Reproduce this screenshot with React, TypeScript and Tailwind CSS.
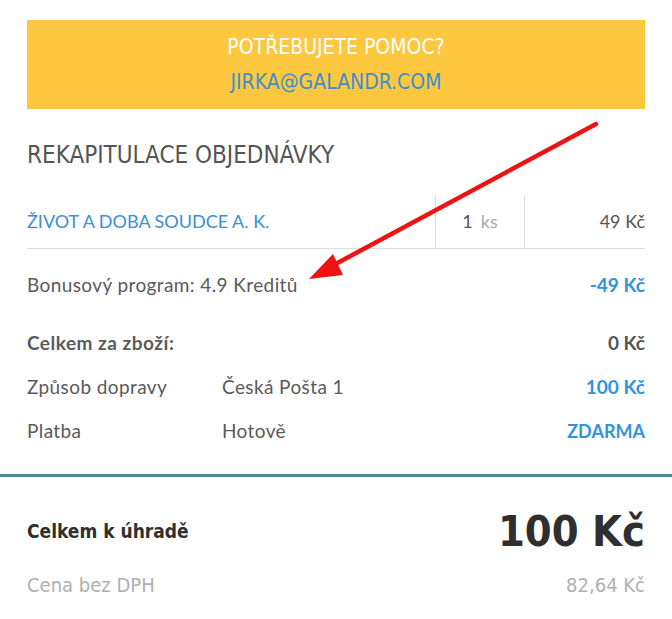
import { ReactNode } from 'react';

const body = "font-['Lato','Liberation_Sans',sans-serif]";
const head = "font-['DejaVu_Sans_Condensed','DejaVu_Sans',sans-serif]";

function Row({ label, middle, value, strong, blue, caps }: { label: string; middle?: string; value: string; strong?: boolean; blue?: boolean; caps?: boolean }) {
  return (
    <div className="flex h-[44px] items-center whitespace-nowrap">
      <div className={`w-[195px] shrink-0 ${strong ? 'text-[19px] font-bold tracking-[0.5px]' : 'text-[19px] tracking-[0.4px]'}`}>{label}</div>
      <div className="flex-1 text-[19px] tracking-[0.4px]">{middle}</div>
      <div className={`font-bold ${caps ? 'text-[18px]' : 'text-[19px]'} ${blue ? 'text-[#3393dc]' : 'text-[#555]'}`}>{value}</div>
    </div>
  );
}

function Arrow() {
  return (
    <svg className="pointer-events-none absolute left-0 top-0" width="672" height="619" viewBox="0 0 672 619">
      <line x1="596" y1="124" x2="330" y2="267" stroke="#ef1212" strokeWidth="4.5" strokeLinecap="round" />
      <polygon points="309,279 333,254 343,275" fill="#ef1212" />
    </svg>
  );
}

function Col({ children, className }: { children: ReactNode; className?: string }) {
  return <div className={`flex h-full items-center ${className ?? ''}`}>{children}</div>;
}

export default function App() {
  return (
    <div className={`relative h-[619px] w-[672px] overflow-hidden bg-white pt-[20px] text-[#5a5a5a] ${body}`}>
      <div className={`mx-[27px] flex h-[89px] flex-col items-center justify-center bg-[#fdc83f] text-[21px] ${head}`}>
        <div className="leading-[35px] text-white">POTŘEBUJETE POMOC?</div>
        <div className="leading-[35px] text-[#3d8fcf]">JIRKA@GALANDR.COM</div>
      </div>

      <div className="px-[27px]">
        <h2 className={`mt-[31px] text-[24px] leading-[30px] text-[#555] ${head}`}>REKAPITULACE OBJEDNÁVKY</h2>

        <div className="mt-[25px] flex h-[54px] border-b border-[#dcdcdc] text-[18px]">
          <Col className="flex-1 text-[#3d8fd6]">ŽIVOT A DOBA SOUDCE A. K.</Col>
          <Col className="w-[90px] justify-center border-x border-[#dcdcdc]">
            <span className="text-[#555]">1</span>
            <span className="ml-[8px] text-[#aaa]">ks</span>
          </Col>
          <Col className="w-[120px] justify-end text-[#555]">49 Kč</Col>
        </div>

        <div className="mt-[14px]">
          <Row label="Bonusový program: 4.9 Kreditů" value="-49 Kč" blue />
        </div>
        <div className="mt-[14px]">
          <Row label="Celkem za zboží:" value="0 Kč" strong />
          <Row label="Způsob dopravy" middle="Česká Pošta 1" value="100 Kč" blue />
          <Row label="Platba" middle="Hotově" value="ZDARMA" blue caps />
        </div>
      </div>

      <div className="mt-[21px] h-[3px] w-full bg-[#4f8994]" />

      <div className="px-[27px]">
        <div className={`mt-[26px] flex h-[56px] items-center justify-between text-[#2f2f2f] ${head}`}>
          <div className="text-[19px] font-bold">Celkem k úhradě</div>
          <div className="text-[43px] font-bold leading-none">100 Kč</div>
        </div>
        <div className={`mt-[11px] flex h-[30px] items-center justify-between text-[20px] text-[#b0b0b0] ${head}`}>
          <div>Cena bez DPH</div>
          <div>82,64 Kč</div>
        </div>
      </div>

      <Arrow />
    </div>
  );
}
